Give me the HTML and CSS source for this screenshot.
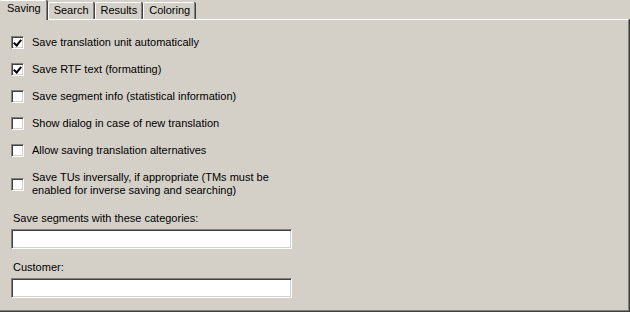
FILE: index.html
```html
<!DOCTYPE html>
<html lang="en">
<head>
  <meta charset="UTF-8">
  <title>Options - Saving</title>
  <link rel="stylesheet" href="styles.css">
</head>
<body>

  <div class="tabs">
    <div class="tab selected">Saving</div>
    <div class="tab">Search</div>
    <div class="tab">Results</div>
    <div class="tab">Coloring</div>
  </div>

  <div class="frame">
    <div class="panel">
      <label class="check"><span class="box checked"></span><span class="text">Save translation unit automatically</span></label>
      <label class="check"><span class="box checked"></span><span class="text">Save RTF text (formatting)</span></label>
      <label class="check"><span class="box"></span><span class="text">Save segment info (statistical information)</span></label>
      <label class="check"><span class="box"></span><span class="text">Show dialog in case of new translation</span></label>
      <label class="check"><span class="box"></span><span class="text">Allow saving translation alternatives</span></label>
      <label class="check double"><span class="box"></span><span class="text">Save TUs inversally, if appropriate (TMs must be<br>enabled for inverse saving and searching)</span></label>

      <div class="field first">
        <div class="field-label">Save segments with these categories:</div>
        <div class="edit"></div>
      </div>
      <div class="field">
        <div class="field-label">Customer:</div>
        <div class="edit"></div>
      </div>
    </div>
  </div>

</body>
</html>
```

FILE: styles.css
```css
* {
  margin: 0;
  padding: 0;
  box-sizing: border-box;
}

body {
  font-family: "Liberation Sans", Arial, sans-serif;
  font-size: 11px;
  color: #000;
  background-color: #d4d0c8;
  width: 630px;
  height: 312px;
  overflow: hidden;
}

/* tab strip */
.tabs {
  display: flex;
  align-items: flex-end;
  height: 19px;
  position: relative;
  z-index: 1;
}

.tab {
  height: 17px;
  line-height: 14px;
  padding: 0 4px 0 5px;
  background-color: #d4d0c8;
  border-top: 1px solid #fff;
  border-left: 1px solid #fff;
  border-right: 1px solid #808080;
  box-shadow: 1px 0 0 #404040;
  border-radius: 2px 2px 0 0;
  margin-right: 1px;
}

.tab.selected {
  height: 20px;
  margin-bottom: -1px;
  line-height: 11px;
  padding: 2px 5px 0 7px;
  border-left: none;
}

/* page frame */
.frame {
  width: 630px;
  height: 293px;
  border-right: 1px solid #404040;
  border-bottom: 1px solid #404040;
}

.panel {
  height: 100%;
  border-top: 1px solid #fff;
  border-right: 1px solid #808080;
  border-bottom: 1px solid #808080;
  padding: 16px 0 0 11px;
}

/* checkboxes */
.check {
  display: flex;
  align-items: center;
  height: 13px;
  margin-bottom: 14px;
}

.check.double {
  height: 26px;
  margin-bottom: 0;
}

.check .text {
  margin-left: 8px;
  line-height: 13px;
}

.box {
  width: 13px;
  height: 13px;
  flex-shrink: 0;
  background-color: #fff;
  border-top: 1px solid #808080;
  border-left: 1px solid #808080;
  border-right: 1px solid #fff;
  border-bottom: 1px solid #fff;
  box-shadow: inset 1px 1px 0 #404040, inset -1px -1px 0 #d4d0c8;
  position: relative;
}

.box.checked::after {
  content: "";
  position: absolute;
  left: 3px;
  top: 1px;
  width: 3px;
  height: 6px;
  border-right: 2px solid #000;
  border-bottom: 2px solid #000;
  transform: rotate(40deg);
}

/* text fields */
.field {
  margin-top: 12px;
}

.field.first {
  margin-top: 15px;
}

.field-label {
  margin-left: 2px;
  line-height: 13px;
  margin-bottom: 4px;
}

.edit {
  width: 281px;
  height: 20px;
  background-color: #fff;
  border-top: 1px solid #808080;
  border-left: 1px solid #808080;
  border-right: 1px solid #fff;
  border-bottom: 1px solid #fff;
  box-shadow: inset 1px 1px 0 #404040, inset -1px -1px 0 #d4d0c8;
}
```
